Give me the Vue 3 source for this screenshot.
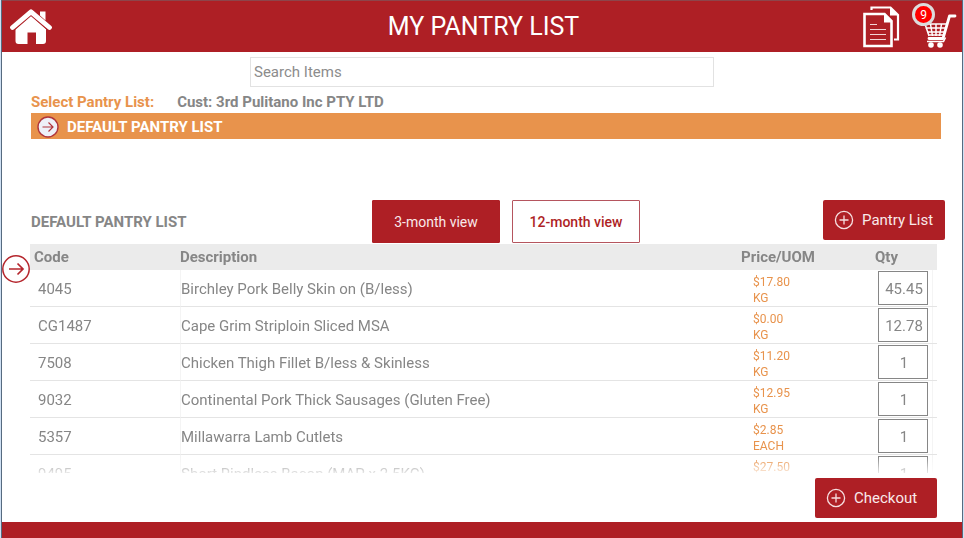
<script setup>
import { ref } from 'vue'

const search = ref('')
const view = ref(3)
const views = [3, 12]

const items = ref([
  { code: '4045', description: 'Birchley Pork Belly Skin on (B/less)', price: '$17.80', uom: 'KG', qty: '45.45' },
  { code: 'CG1487', description: 'Cape Grim Striploin Sliced MSA', price: '$0.00', uom: 'KG', qty: '12.78' },
  { code: '7508', description: 'Chicken Thigh Fillet B/less & Skinless', price: '$11.20', uom: 'KG', qty: '1' },
  { code: '9032', description: 'Continental Pork Thick Sausages (Gluten Free)', price: '$12.95', uom: 'KG', qty: '1' },
  { code: '5357', description: 'Millawarra Lamb Cutlets', price: '$2.85', uom: 'EACH', qty: '1' },
  { code: '9495', description: 'Short Rindless Bacon (MAP x 2.5KG)', price: '$27.50', uom: 'KG', qty: '1' },
])
</script>

<template>
  <div class="page">
    <header class="topbar">
      <a class="home" href="#home" aria-label="Home">
        <svg width="42" height="36" viewBox="0 0 42 36" fill="#fff">
          <path d="M30 2.500h5.500v9L30 6.500z" />
          <path d="M21 6.500 36 20V32q0 3-3 3h-7V23.500h-8.500V35H8.500q-3 0-3-3V20z" />
          <path d="M2.500 19.300 21 3.300 39.500 19.300" fill="none" stroke="#ae1f25" stroke-width="6" />
          <path d="M2.500 18.500 21 2.800 39.500 18.500" fill="none" stroke="#fff" stroke-width="4.800" stroke-linecap="round" stroke-linejoin="round" />
        </svg>
      </a>
      <h1>MY PANTRY LIST</h1>
      <nav class="actions">
        <a href="#orders" aria-label="Orders">
          <svg width="38" height="42" viewBox="0 0 38 42" fill="none" stroke="#fff">
            <path d="M8.500 4V1.500h19L35 9v24.500h-4" stroke-width="2.200" />
            <path d="M27 1.500v8h8z" fill="#fff" stroke="none" />
            <path d="M1.500 8h20L28.500 15v25h-27z" stroke-width="2.600" />
            <path d="M21 7.500v9h8z" fill="#fff" stroke="none" />
            <path d="M7 18.500h7M7 23.500h16M7 28.500h16M7 33.500h16" stroke-width="1.200" stroke="#f3d4d6" />
          </svg>
        </a>
        <a class="cart" href="#cart" aria-label="Cart, 9 items">
          <svg width="34" height="34" viewBox="0 0 34 34" fill="none" stroke="#fff">
            <path d="M32 2h-5.500L20 24.500H6" stroke-width="2.800" stroke-linecap="round" stroke-linejoin="round" />
            <path d="M1 10h22.500M2.500 14h20M4 18h17.500M5.500 21h15M2 10l4 12M7.500 10l2 12M13 10v12M18.500 10l-2 12" stroke-width="1.500" />
            <path d="M4 27.500h16.500l2-4" stroke-width="1.600" />
            <circle cx="8" cy="31" r="2.800" fill="#fff" stroke="none" />
            <circle cx="17" cy="31" r="2.800" fill="#fff" stroke="none" />
          </svg>
          <span class="badge">9</span>
        </a>
      </nav>
    </header>

    <main>
      <input v-model="search" class="search" type="text" placeholder="Search Items" aria-label="Search Items" />

      <section class="chooser">
        <p class="customer"><span class="prompt">Select Pantry List:</span><span>Cust: 3rd Pulitano Inc PTY LTD</span></p>
        <button class="list-option" type="button">
          <svg width="22" height="22" viewBox="0 0 22 22" fill="none" stroke="#b0353c">
            <circle cx="11" cy="11" r="10" fill="#eef0f8" stroke-width="1.400" />
            <path d="M5.500 11h10.500M11.500 6.500 16 11l-4.500 4.500" stroke-width="1.200" />
          </svg>
          DEFAULT PANTRY LIST
        </button>
      </section>

      <section class="toolbar">
        <h2>DEFAULT PANTRY LIST</h2>
        <div class="views">
          <button v-for="n in views" :key="n" type="button" class="view" :class="{ active: view === n }" @click="view = n">{{ n }}-month view</button>
        </div>
        <button class="action" type="button">
          <svg width="20" height="20" viewBox="0 0 20 20" fill="none" stroke="#f6dfe0" stroke-width="1.300">
            <circle cx="10" cy="10" r="8.600" />
            <path d="M10 5.500v9M5.500 10h9" />
          </svg>
          Pantry List
        </button>
      </section>

      <section class="list">
        <button class="expand" type="button" aria-label="Show pantry lists">
          <svg width="28" height="28" viewBox="0 0 28 28" fill="none" stroke="#b5262d">
            <circle cx="14" cy="14" r="13.200" fill="#fff" stroke-width="1.500" />
            <path d="M7 14h14M15.500 8.500 21 14l-5.500 5.500" stroke-width="1.700" />
          </svg>
        </button>
        <div class="scroller">
          <table>
            <thead>
              <tr>
                <th class="code">Code</th>
                <th class="desc">Description</th>
                <th class="price">Price/UOM</th>
                <th class="qty">Qty</th>
              </tr>
            </thead>
            <tbody>
              <tr v-for="item in items" :key="item.code">
                <td class="code">{{ item.code }}</td>
                <td class="desc">{{ item.description }}</td>
                <td class="price">{{ item.price }}<br />{{ item.uom }}</td>
                <td class="qty"><input v-model="item.qty" type="text" :aria-label="'Quantity of ' + item.description" /></td>
              </tr>
            </tbody>
          </table>
        </div>
      </section>

      <div class="checkout">
        <button class="action" type="button">
          <svg width="20" height="20" viewBox="0 0 20 20" fill="none" stroke="#f6dfe0" stroke-width="1.300">
            <circle cx="10" cy="10" r="8.600" />
            <path d="M10 5.500v9M5.500 10h9" />
          </svg>
          Checkout
        </button>
      </div>
    </main>

    <footer></footer>
  </div>
</template>

<style>
body {
  background: #cfe0f3;
}
</style>

<style scoped>
* {
  box-sizing: border-box;
}

.page {
  display: flex;
  flex-direction: column;
  height: 100vh;
  margin: 0 1px;
  border: solid #566b80;
  border-width: 0 1px;
  background: #fff;
  color: #868686;
  font: 15px/20px Roboto, sans-serif;
}

button,
input {
  font: inherit;
}

button {
  cursor: pointer;
}

.topbar {
  display: grid;
  grid-template-columns: 1fr auto 1fr;
  align-items: center;
  height: 52px;
  flex: none;
  padding: 0 5px 0 8px;
  border-top: 1px solid #8d454b;
  background: #ae1f25;
}

.topbar svg {
  display: block;
}

.home {
  justify-self: start;
}

h1 {
  margin: 0;
  color: #fff;
  font-size: 25px;
  font-weight: 400;
}

.actions {
  display: flex;
  justify-self: end;
  gap: 22px;
}

.cart {
  position: relative;
  padding-top: 8px;
  text-decoration: none;
}

.badge {
  position: absolute;
  top: -3px;
  left: -11px;
  width: 23px;
  height: 23px;
  border: 3px solid #dcdcdc;
  border-radius: 50%;
  background: #f00;
  color: #fff;
  font-size: 12px;
  line-height: 18px;
  text-align: center;
}

main {
  display: flex;
  flex: 1;
  flex-direction: column;
  min-height: 0;
  padding: 5px 17px 4px 29px;
}

.search {
  align-self: center;
  width: 464px;
  max-width: 100%;
  height: 30px;
  margin-right: 12px;
  padding: 0 3px;
  border: 1px solid #e2e2e2;
  outline: 0;
  color: #868686;
}

.search::placeholder {
  color: #8c8c8c;
  opacity: 1;
}

.chooser {
  margin-right: 4px;
}

.customer {
  display: flex;
  gap: 23px;
  margin: 5px 0 1px;
  font-weight: 700;
}

.prompt {
  color: #e8934c;
}

.list-option {
  display: flex;
  align-items: center;
  gap: 8px;
  width: 100%;
  height: 26px;
  padding: 1px 6px 0;
  border: 0;
  background: #e8934c;
  color: #fff;
  font-weight: 700;
}

.toolbar {
  display: grid;
  grid-template-columns: 1fr auto 1fr;
  align-items: center;
  margin-top: 61px;
}

h2 {
  margin: 0;
  font-size: 15px;
  font-weight: 700;
}

.views {
  display: flex;
  gap: 12px;
  padding-left: 36px;
}

.view {
  width: 128px;
  height: 43px;
  padding: 0;
  border: 1px solid #b5555e;
  border-radius: 1px;
  background: #fff;
  color: #ae1f25;
  font-size: 14px;
  font-weight: 500;
}

.view.active {
  border-color: #ae1f25;
  background: #ae1f25;
  color: #f9e9ea;
  font-weight: 400;
}

.action {
  display: flex;
  align-items: center;
  gap: 8px;
  width: 122px;
  height: 40px;
  padding: 0 11px;
  border: 0;
  border-radius: 2px;
  background: #ae1f25;
  color: #f9e9ea;
}

.toolbar .action {
  align-self: start;
  justify-self: end;
}

.list {
  position: relative;
  flex: 1;
  min-height: 0;
  margin: 1px 8px 5px -1px;
}

.expand {
  position: absolute;
  z-index: 1;
  top: 11px;
  left: -28px;
  padding: 0;
  border: 0;
  background: none;
}

.expand svg {
  display: block;
}

.scroller {
  height: 100%;
  overflow: hidden;
  mask-image: linear-gradient(to top, rgb(0 0 0 / 0.2), #000 16px);
}

table {
  width: 100%;
  border-collapse: separate;
  border-spacing: 0;
  table-layout: fixed;
}

th {
  height: 26px;
  padding: 0;
  background: #ebebeb;
  font-weight: 700;
  text-align: left;
}

th.code {
  width: 150px;
  padding-left: 4px;
}

th.price {
  width: 134px;
}

th.qty {
  width: 62px;
}

td {
  height: 37px;
  padding: 1px 0 0;
  border-bottom: 1px solid #e4e4e4;
}

td.code {
  padding-left: 8px;
}

td.desc {
  border-left: 1px solid #f4f4f4;
}

td.price {
  padding: 4px 0 0 12px;
  color: #e8934c;
  font-size: 12px;
  line-height: 16px;
}

td.qty {
  padding: 0 0 0 3px;
  background: linear-gradient(#f4f4f4 0 0) right 4px top / 1px 100% no-repeat;
}

td.qty input {
  display: block;
  width: 50px;
  height: 34px;
  padding: 2px 0 0 2px;
  border: 1px solid #868686;
  border-radius: 0;
  background: #fff;
  color: #868686;
  text-align: center;
}

.checkout {
  display: flex;
  justify-content: flex-end;
  padding-right: 8px;
}

footer {
  height: 16px;
  flex: none;
  background: #ae1f25;
}
</style>
